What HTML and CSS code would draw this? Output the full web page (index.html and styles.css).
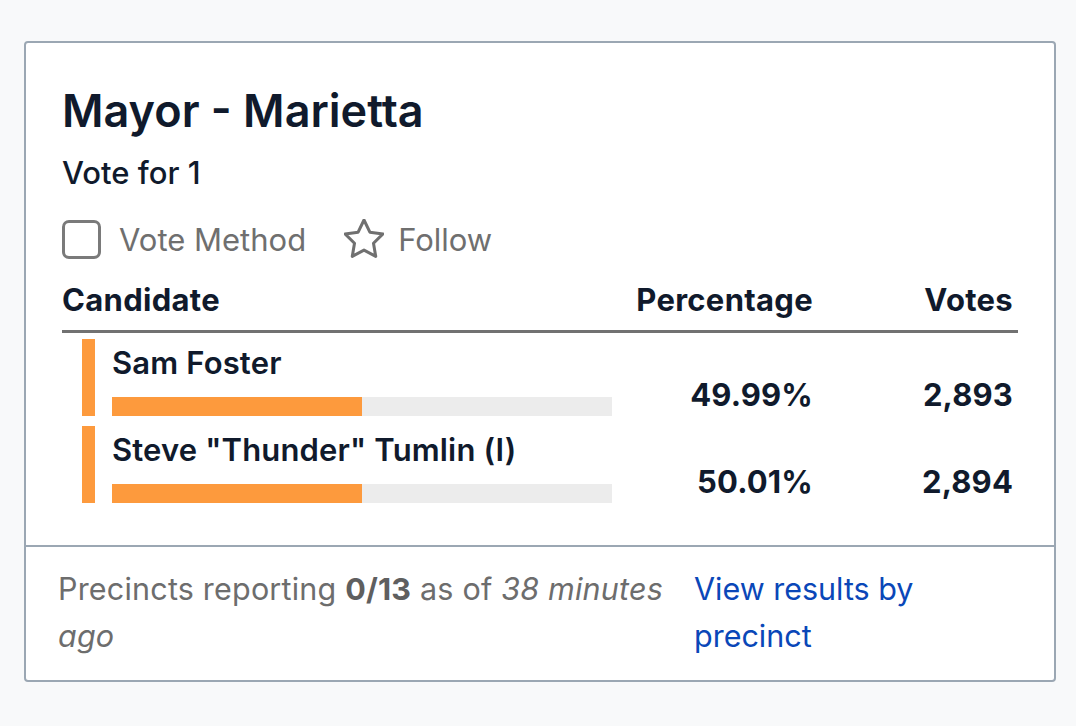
FILE: index.html
```html
<!DOCTYPE html>
<html lang="en">
<head>
<meta charset="utf-8">
<title>Mayor - Marietta</title>
<link rel="stylesheet" href="styles.css">
</head>
<body>
<div class="card">
  <div class="card-main">
    <h1 class="race-title">Mayor - Marietta</h1>
    <div class="vote-for">Vote for 1</div>
    <div class="options">
      <label class="option"><span class="checkbox"></span><span>Vote Method</span></label>
      <span class="option follow">
        <svg class="star" viewBox="2.1 2.1 19.8 19.8" width="40" height="40" aria-hidden="true"><polygon points="12 2.6 14.9 8.6 21.4 9.5 16.7 14.1 17.8 20.6 12 17.5 6.2 20.6 7.3 14.1 2.6 9.5 9.1 8.6" fill="none" stroke="#707070" stroke-width="1.5" stroke-linejoin="round"/></svg>
        <span>Follow</span>
      </span>
    </div>
    <div class="results">
      <div class="row head">
        <div class="cell cand">Candidate</div>
        <div class="cell num">Percentage</div>
        <div class="cell num">Votes</div>
      </div>
      <div class="row cand-row">
        <div class="cell cand">
          <span class="swatch"></span>
          <div class="cand-info">
            <div class="cand-name">Sam Foster</div>
            <div class="bar"><div class="fill" style="width:49.99%"></div></div>
          </div>
        </div>
        <div class="cell num">49.99%</div>
        <div class="cell num">2,893</div>
      </div>
      <div class="row cand-row">
        <div class="cell cand">
          <span class="swatch"></span>
          <div class="cand-info">
            <div class="cand-name">Steve "Thunder" Tumlin (I)</div>
            <div class="bar"><div class="fill" style="width:50.01%"></div></div>
          </div>
        </div>
        <div class="cell num">50.01%</div>
        <div class="cell num">2,894</div>
      </div>
    </div>
  </div>
  <div class="card-footer">
    <p class="reporting">Precincts reporting <strong>0/13</strong> as of <em>38 minutes</em> <em>ago</em></p>
    <a class="precinct-link" href="#">View results by precinct</a>
  </div>
</div>
</body>
</html>
```

FILE: styles.css
```css
* { box-sizing: border-box; }

body {
  margin: 0;
  background: #f8f9fa;
  font-family: Inter, "Noto Sans", sans-serif;
  color: #101a2c;
}

.card {
  margin: 41px 20px 0 24px;
  width: 1032px;
  background: #ffffff;
  border: 2px solid #9ba7b3;
  border-radius: 4px;
}

.card-main {
  padding: 41px 36px 42px 36px;
}

.race-title {
  margin: 0;
  font-size: 45px;
  line-height: 54px;
  font-weight: 600;
}

.vote-for {
  margin-top: 13px;
  font-size: 31px;
  line-height: 44px;
  font-weight: 500;
}

.options {
  display: flex;
  align-items: center;
  gap: 38px;
  height: 44px;
  margin-top: 22px;
  font-size: 31px;
  color: #6f6f6f;
}

.option {
  display: flex;
  align-items: center;
  gap: 18px;
}

.option.follow { gap: 14px; }

.checkbox {
  width: 39px;
  height: 39px;
  border: 3px solid #7a7a7a;
  border-radius: 7px;
}

.star { display: block; }

.results {
  margin-top: 17px;
}

.row {
  display: grid;
  grid-template-columns: 1fr 200px 200px;
}

.head {
  font-size: 31px;
  font-weight: 700;
  line-height: 44px;
  letter-spacing: 0.3px;
  border-bottom: 3px solid #717171;
  padding-bottom: 8px;
  margin-bottom: 6px;
}

.cell.num {
  text-align: right;
  padding-right: 5px;
}

.cand-row {
  height: 77px;
  margin-bottom: 10px;
  font-size: 31px;
  font-weight: 700;
  letter-spacing: 0.15px;
}

.cand-row:last-child { margin-bottom: 0; }

.cand-row .num {
  align-self: end;
  line-height: 42px;
}

.cand-row .cand {
  display: flex;
  padding-left: 20px;
  gap: 17px;
}

.swatch {
  width: 13px;
  background: #fd9a3d;
}

.cand-info {
  display: flex;
  flex-direction: column;
  justify-content: space-between;
  padding-top: 4px;
}

.cand-name {
  line-height: 40px;
  font-weight: 600;
}

.bar {
  width: 500px;
  height: 19px;
  background: #ececec;
}

.fill {
  height: 100%;
  background: #fd9a3d;
}

.card-footer {
  display: grid;
  grid-template-columns: 636px 260px;
  border-top: 2px solid #9ba7b3;
  padding: 18px 32px 21px 32px;
  font-size: 30.5px;
  line-height: 47px;
}

.reporting {
  margin: 0;
  color: #6d6d6d;
  letter-spacing: 0.2px;
}

.reporting strong { font-weight: 700; color: #5f5f5f; }

.precinct-link {
  color: #0a47b8;
  text-decoration: none;
}
```
